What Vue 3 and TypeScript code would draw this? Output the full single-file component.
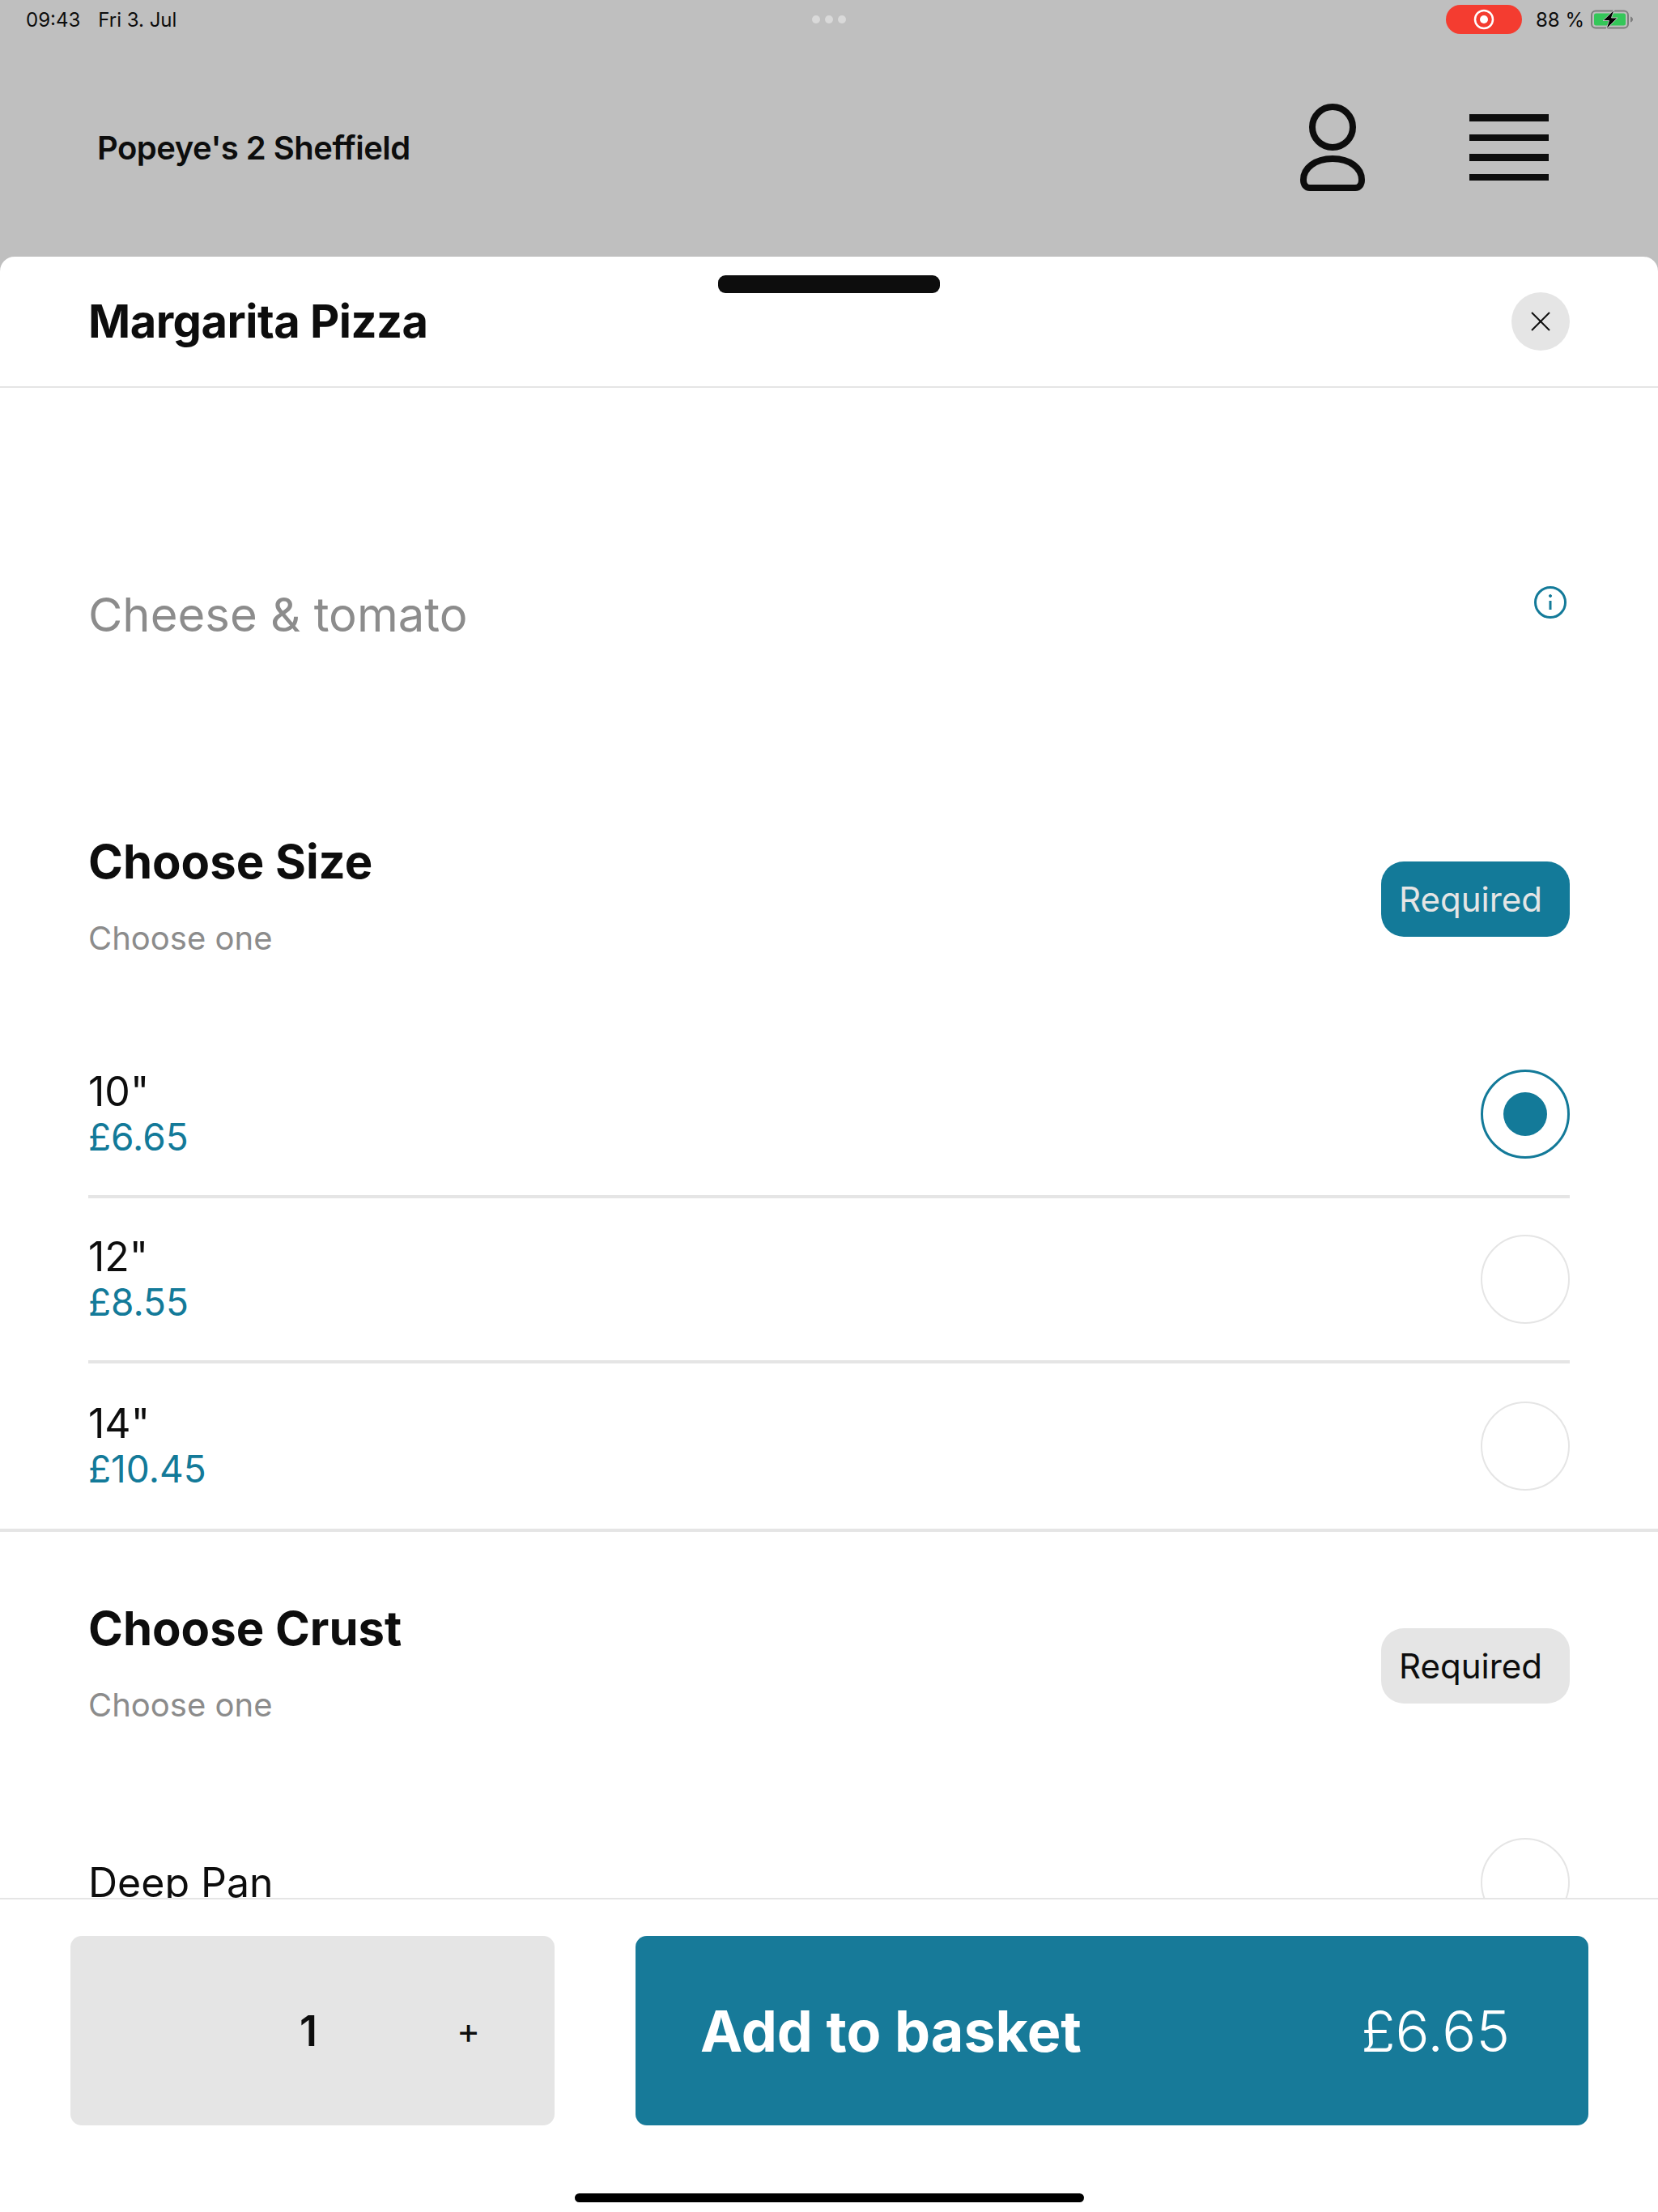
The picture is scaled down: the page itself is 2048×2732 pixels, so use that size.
<script setup lang="ts">
import { ref } from 'vue'

interface SizeOption {
  label: string
  price: string
}

const sizes: SizeOption[] = [
  { label: '10"', price: '£6.65' },
  { label: '12"', price: '£8.55' },
  { label: '14"', price: '£10.45' },
]

const selected = ref(0)
const quantity = ref(1)
</script>

<template>
  <div class="screen">
    <div class="top">
      <div class="status-bar">
        <div class="status-left">
          <span>09:43</span>
          <span>Fri 3. Jul</span>
        </div>
        <div class="status-dots"><i></i><i></i><i></i></div>
        <div class="status-right">
          <div class="rec-pill">
            <svg width="26" height="26" viewBox="0 0 26 26">
              <circle cx="13" cy="13" r="11" fill="none" stroke="#fff" stroke-width="2.5" />
              <circle cx="13" cy="13" r="5" fill="#fff" />
            </svg>
          </div>
          <span class="battery-text">88 %</span>
          <svg class="battery" width="53" height="24" viewBox="0 0 53 24">
            <rect x="1" y="1.5" width="45" height="21" rx="5" fill="none" stroke="#7d7d7d" stroke-width="2" />
            <rect x="4" y="4.5" width="39" height="15" rx="2.5" fill="#34c759" />
            <path d="M49 8.5c2 .6 3 2 3 3.5s-1 2.900-3 3.500z" fill="#7d7d7d" />
            <path d="M29 0 15 13.500h7.500L19 24l14-14h-7.500z" fill="#000" stroke="#bfbfbf" stroke-width="1" />
          </svg>
        </div>
      </div>
      <div class="site-header">
        <div class="site-name">Popeye's 2 Sheffield</div>
        <div class="site-actions">
          <svg class="user-icon" width="84" height="108" viewBox="0 0 84 108" fill="none" stroke="#0d0d0d" stroke-width="8">
            <circle cx="42" cy="29" r="25" />
            <path d="M6 94c0-14 14-26 36-26s36 12 36 26c0 6-3 10-8 10H14c-5 0-8-4-8-10z" />
          </svg>
          <div class="burger"><i></i><i></i><i></i><i></i></div>
        </div>
      </div>
    </div>

    <div class="sheet">
      <div class="grabber"></div>
      <div class="sheet-head">
        <h1>Margarita Pizza</h1>
        <button class="close-btn">
          <svg width="26" height="26" viewBox="0 0 26 26" stroke="#0d0d0d" stroke-width="2">
            <line x1="2" y1="2" x2="24" y2="24" />
            <line x1="24" y1="2" x2="2" y2="24" />
          </svg>
        </button>
      </div>

      <div class="sheet-body">
        <div class="description">
          <p>Cheese &amp; tomato</p>
          <svg width="40" height="40" viewBox="0 0 40 40" fill="none" stroke="#137a99" stroke-width="3">
            <circle cx="20" cy="20" r="18.500" />
            <line x1="20" y1="18" x2="20" y2="29" />
            <circle cx="20" cy="12" r="1.500" fill="#137a99" stroke-width="1" />
          </svg>
        </div>

        <section class="group group-size">
          <div class="group-head">
            <div>
              <h2>Choose Size</h2>
              <div class="hint">Choose one</div>
            </div>
            <span class="tag tag-active">Required</span>
          </div>
          <div class="options">
            <div v-for="(size, i) in sizes" :key="size.label" class="option">
              <div>
                <div class="option-label">{{ size.label }}</div>
                <div class="option-price">{{ size.price }}</div>
              </div>
              <span class="radio" :class="{ checked: selected === i }"></span>
            </div>
          </div>
        </section>

        <section class="group group-crust">
          <div class="group-head">
            <div>
              <h2>Choose Crust</h2>
              <div class="hint">Choose one</div>
            </div>
            <span class="tag">Required</span>
          </div>
          <div class="options">
            <div class="option">
              <div>
                <div class="option-label">Deep Pan</div>
              </div>
              <span class="radio"></span>
            </div>
          </div>
        </section>
      </div>

      <div class="sheet-foot">
        <div class="foot-actions">
          <div class="qty">
            <span class="qty-value">{{ quantity }}</span>
            <span class="qty-plus">+</span>
          </div>
          <button class="add-btn">
            <span class="add-label">Add to basket</span>
            <span class="add-price">£6.65</span>
          </button>
        </div>
        <div class="home-bar"></div>
      </div>
    </div>
  </div>
</template>

<style>
html,
body {
  margin: 0;
  background: #fff;
}
</style>

<style scoped>
.screen {
  display: flex;
  flex-direction: column;
  width: 2048px;
  height: 2732px;
  overflow: hidden;
  font-family: Inter, 'Liberation Sans', sans-serif;
  color: #0d0d0d;
  background: #bfbfbf;
}

.top {
  height: 317px;
  flex-shrink: 0;
}

.status-bar {
  position: relative;
  display: flex;
  align-items: center;
  justify-content: space-between;
  height: 48px;
  padding: 0 30px 0 32px;
  font-size: 24px;
}

.status-left {
  display: flex;
  gap: 22px;
}

.status-dots {
  position: absolute;
  left: 1003px;
  top: 19px;
  display: flex;
  gap: 6px;
}

.status-dots i {
  width: 10px;
  height: 10px;
  border-radius: 50%;
  background: #d9d9d9;
}

.status-right {
  display: flex;
  align-items: center;
}

.rec-pill {
  display: flex;
  align-items: center;
  justify-content: center;
  width: 94px;
  height: 36px;
  border-radius: 18px;
  background: #f43c30;
}

.battery-text {
  margin-left: 17px;
}

.battery {
  margin-left: 8px;
}

.site-header {
  display: flex;
  align-items: center;
  justify-content: space-between;
  height: 268px;
  padding: 0 135px 0 120px;
}

.site-name {
  font-size: 40px;
  font-weight: 600;
  letter-spacing: -0.5px;
}

.site-actions {
  display: flex;
  align-items: center;
  gap: 127px;
}

.burger {
  display: flex;
  flex-direction: column;
  gap: 16px;
  width: 98px;
}

.burger i {
  height: 8.500px;
  background: #0d0d0d;
}

.sheet {
  position: relative;
  flex: 1;
  display: flex;
  flex-direction: column;
  min-height: 0;
  background: #fff;
  border-radius: 18px 18px 0 0;
}

.grabber {
  position: absolute;
  left: 887px;
  top: 23px;
  width: 274px;
  height: 22px;
  border-radius: 9px;
  background: #0d0d0d;
}

.sheet-head {
  display: flex;
  align-items: center;
  justify-content: space-between;
  height: 160px;
  padding: 0 109px;
  border-bottom: 2px solid #e5e5e5;
  flex-shrink: 0;
}

h1 {
  margin: 0;
  font-size: 56px;
  font-weight: 700;
  letter-spacing: -0.5px;
}

.close-btn {
  display: flex;
  align-items: center;
  justify-content: center;
  width: 72px;
  height: 72px;
  padding: 0;
  border: none;
  border-radius: 50%;
  background: #e5e5e5;
}

.sheet-body {
  flex: 1;
  min-height: 0;
  overflow: hidden;
}

.description {
  display: flex;
  align-items: flex-start;
  justify-content: space-between;
  padding: 245px 113px 0 109px;
  height: 550px;
  box-sizing: border-box;
}

.description p {
  margin: 0;
  font-size: 58px;
  line-height: 70px;
  color: #8c8c8c;
}

.group {
  padding: 0 109px;
}

.group-size {
  border-bottom: 4px solid #e5e5e5;
}

.group-crust {
  padding-top: 84px;
}

.group-head {
  display: flex;
  align-items: flex-start;
  justify-content: space-between;
}

h2 {
  margin: 0;
  font-size: 58px;
  line-height: 70px;
  font-weight: 700;
}

.hint {
  margin-top: 35px;
  font-size: 40px;
  line-height: 50px;
  color: #8c8c8c;
}

.tag {
  margin-top: 35px;
  padding: 0 34px 0 22px;
  height: 93px;
  line-height: 93px;
  border-radius: 28px;
  font-size: 42px;
  background: #e5e5e5;
  color: #0d0d0d;
}

.tag-active {
  background: #137a99;
  color: #e5e5e5;
}

.options {
  margin-top: 92px;
}

.option {
  display: flex;
  align-items: center;
  justify-content: space-between;
  height: 204px;
  box-sizing: border-box;
  border-bottom: 4px solid #e5e5e5;
}

.option:last-child {
  border-bottom: none;
}

.option-label {
  font-size: 50px;
  line-height: 56px;
}

.option-price {
  font-size: 46px;
  line-height: 56px;
  color: #137a99;
}

.radio {
  display: flex;
  align-items: center;
  justify-content: center;
  width: 110px;
  height: 110px;
  box-sizing: border-box;
  border: 2px solid #e5e5e5;
  border-radius: 50%;
}

.radio.checked {
  border: 3px solid #137a99;
}

.radio.checked::after {
  content: '';
  width: 54px;
  height: 54px;
  border-radius: 50%;
  background: #137a99;
}

.sheet-foot {
  position: relative;
  flex-shrink: 0;
  height: 388px;
  box-sizing: border-box;
  padding: 45px 86px 0 87px;
  border-top: 2px solid #e5e5e5;
  background: #fff;
}

.foot-actions {
  display: flex;
  gap: 100px;
  height: 234px;
}

.qty {
  display: flex;
  align-items: center;
  justify-content: flex-end;
  width: 598px;
  box-sizing: border-box;
  padding-right: 92px;
  border-radius: 14px;
  background: #e5e5e5;
}

.qty-value {
  font-size: 52px;
  font-weight: 600;
  margin-right: 172px;
}

.qty-plus {
  font-size: 44px;
}

.add-btn {
  flex: 1;
  display: flex;
  align-items: center;
  justify-content: space-between;
  padding: 0 97px 0 80px;
  border: none;
  border-radius: 14px;
  background: #177a99;
  color: #fff;
  font-family: inherit;
}

.add-label {
  font-size: 70px;
  font-weight: 700;
}

.add-price {
  font-size: 70px;
  font-weight: 300;
}

.home-bar {
  width: 629px;
  height: 11px;
  margin: 84px auto 0;
  border-radius: 6px;
  background: #000;
}
</style>
